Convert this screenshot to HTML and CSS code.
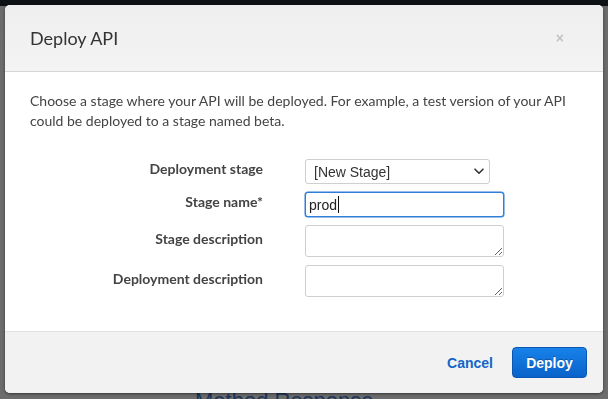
FILE: index.html
```html
<!DOCTYPE html>
<html lang="en">
<head>
    <meta charset="UTF-8">
    <meta name="viewport" content="width=device-width, initial-scale=1.0">
    <title>Deploy API</title>
    <link rel="stylesheet" href="styles.css">
</head>
<body>
    <!-- page behind the dialog -->
    <div class="backdrop">
        <div class="top-bar"></div>
        <div class="behind-title">Method Response</div>
    </div>

    <!-- dialog -->
    <div class="modal">
        <div class="modal-header">
            <h3 class="modal-title">Deploy API</h3>
            <span class="close">&times;</span>
        </div>

        <div class="modal-body">
            <p class="intro">Choose a stage where your API will be deployed. For example, a test version of your API could be deployed to a stage named beta.</p>

            <div class="form">
                <label class="form-label">Deployment stage</label>
                <div class="select-wrap">
                    <select class="field select">
                        <option>[New Stage]</option>
                    </select>
                    <svg class="chevron" width="10" height="7" viewBox="0 0 10 7">
                        <path d="M1 1.2 L5 5.2 L9 1.2" fill="none" stroke="#333" stroke-width="1.6" stroke-linecap="round" stroke-linejoin="round"/>
                    </svg>
                </div>

                <label class="form-label">Stage name*</label>
                <div class="input-wrap">
                    <input class="field text focused" type="text" value="prod">
                    <span class="caret"></span>
                </div>

                <label class="form-label">Stage description</label>
                <textarea class="field area"></textarea>

                <label class="form-label">Deployment description</label>
                <textarea class="field area"></textarea>
            </div>
        </div>

        <div class="modal-footer">
            <a class="cancel" href="#">Cancel</a>
            <button class="deploy">Deploy</button>
        </div>
    </div>
</body>
</html>
```

FILE: styles.css
```css
/* basic */
body {
    margin: 0;
    height: 100vh;
    overflow: hidden;
    font-family: Lato, "Open Sans", sans-serif;
    background-color: #6c6c6c;
}

.backdrop {
    height: 100%;
    display: flex;
    flex-direction: column;
    justify-content: space-between;
}

.top-bar {
    height: 6px;
    background-color: #0e1216;
}

.behind-title {
    margin: 0 0 -12px 195px;
    font-family: "Liberation Sans", Arial, sans-serif;
    font-size: 22px;
    line-height: 20px;
    color: #1d3459;
}

/* dialog */
.modal {
    position: fixed;
    top: 5px;
    left: 5px;
    width: 598px;
    height: 388px;
    display: grid;
    grid-template-rows: auto 1fr auto;
    background-color: #fff;
    border-radius: 5px;
    overflow: hidden;
    box-shadow: 0 1px 3px rgba(0, 0, 0, 0.5);
}

.modal-header {
    height: 66px;
    display: flex;
    align-items: center;
    justify-content: space-between;
    padding: 0 39px 0 25px;
    background: linear-gradient(#eeeeee, #f4f4f4);
    border-bottom: 1px solid #d6d6d6;
}

.modal-title {
    margin: 0;
    font-size: 18px;
    font-weight: 400;
    color: #333;
}

.close {
    font-family: "Liberation Sans", Arial, sans-serif;
    font-size: 14px;
    font-weight: bold;
    color: #c4c4c4;
}

.modal-body {
    padding: 19px 25px 0 25px;
}

.intro {
    margin: 0 0 28px 0;
    font-size: 14px;
    line-height: 20px;
    color: #444;
}

.form {
    display: grid;
    grid-template-columns: 233px 199px;
    column-gap: 42px;
    row-gap: 8px;
    align-items: center;
}

.form-label {
    text-align: right;
    font-size: 14px;
    font-weight: 700;
    color: #444;
    margin-top: -6px;
}

.field {
    box-sizing: border-box;
    margin: 0;
    border: 1px solid #cfcfcf;
    border-radius: 3px;
    background-color: #fff;
    font-family: "Liberation Sans", Arial, sans-serif;
    font-size: 14px;
    color: #222;
}

.select-wrap {
    position: relative;
    width: 185px;
}

.select {
    appearance: none;
    width: 185px;
    height: 25px;
    padding: 0 0 0 8px;
    color: #333;
}

.chevron {
    position: absolute;
    right: 6px;
    top: 9px;
}

.input-wrap {
    position: relative;
}

.text {
    width: 199px;
    height: 25px;
    padding: 0 3px;
    outline: none;
}

.text.focused,
.text:focus {
    border-color: #2f7fd8;
    box-shadow: 0 0 0 0.5px #2f7fd8;
}

.caret {
    position: absolute;
    left: 33px;
    top: 4px;
    width: 1px;
    height: 17px;
    background-color: #111;
}

.area {
    width: 199px;
    height: 32px;
    display: block;
}

/* footer */
.modal-footer {
    height: 61px;
    display: flex;
    align-items: center;
    justify-content: flex-end;
    gap: 19px;
    padding: 0 16px 0 0;
    background-color: #f2f2f2;
    border-top: 1px solid #e0e0e0;
}

.cancel {
    font-family: "Liberation Sans", Arial, sans-serif;
    font-size: 14px;
    font-weight: bold;
    color: #1166c8;
    text-decoration: none;
}

.deploy {
    width: 75px;
    height: 31px;
    font-family: "Liberation Sans", Arial, sans-serif;
    font-size: 14px;
    font-weight: bold;
    color: #fff;
    text-shadow: 0 -1px 0 rgba(0, 0, 0, 0.3);
    background: linear-gradient(#1782ea, #0a62c9);
    border: 1px solid #0a56b3;
    border-radius: 4px;
    cursor: pointer;
}
```
